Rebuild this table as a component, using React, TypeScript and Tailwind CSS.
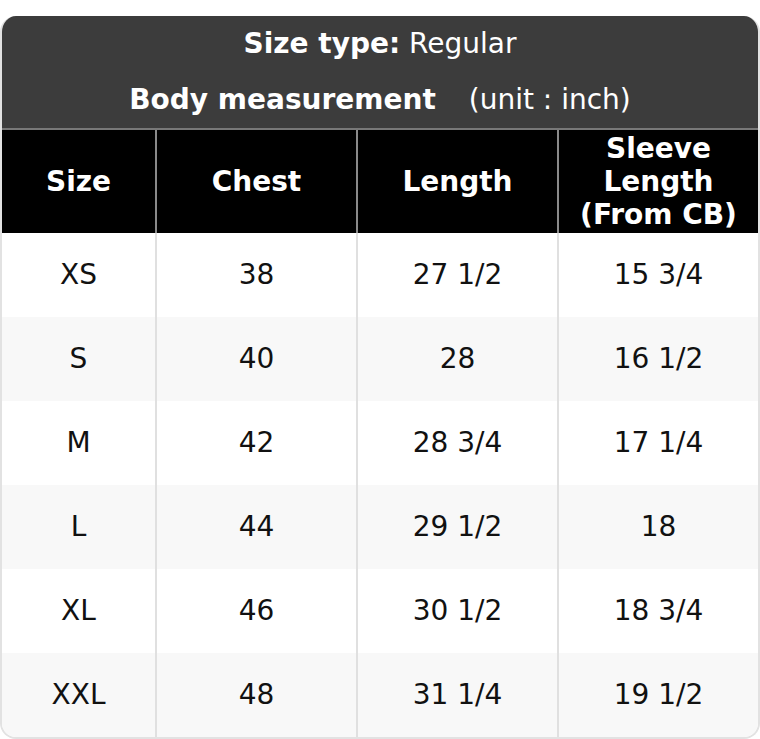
import React from "react";

const rows = [
  ["XS", "38", "27 1/2", "15 3/4"],
  ["S", "40", "28", "16 1/2"],
  ["M", "42", "28 3/4", "17 1/4"],
  ["L", "44", "29 1/2", "18"],
  ["XL", "46", "30 1/2", "18 3/4"],
  ["XXL", "48", "31 1/4", "19 1/2"],
];

const cols = "grid grid-cols-[155px_201px_201px_1fr]";

export default function App() {
  return (
    <div className="w-[760px] bg-white pt-[16px]" style={{ fontFamily: '"DejaVu Sans", sans-serif' }}>
      <div className="overflow-hidden rounded-[16px] border-2 border-[#e2e2e2] border-t-0">
        <div className="bg-[#3c3c3c] text-white text-[28px] text-center">
          <div className="h-[56px] flex items-center justify-center">
            <span className="font-bold">Size type:</span>
            <span>&nbsp;Regular</span>
          </div>
          <div className="h-[56px] flex items-center justify-center">
            <span className="font-bold">Body measurement</span>
            <span className="ml-[33px]">(unit : inch)</span>
          </div>
        </div>
        <div className={`${cols} bg-black text-white font-bold text-[28px] leading-[33px] text-center border-t-2 border-[#787878]`}>
          <div className="h-[103px] flex items-center justify-center border-r-2 border-[#8a8a8a]">Size</div>
          <div className="h-[103px] flex items-center justify-center border-r-2 border-[#8a8a8a]">Chest</div>
          <div className="h-[103px] flex items-center justify-center border-r-2 border-[#8a8a8a]">Length</div>
          <div className="h-[103px] flex items-center justify-center">
            Sleeve
            <br />
            Length
            <br />
            (From CB)
          </div>
        </div>
        {rows.map((r, i) => (
          <div
            key={r[0]}
            className={`${cols} text-[28px] text-[#111] text-center ${i % 2 === 1 ? "bg-[#f8f8f8]" : "bg-white"}`}
          >
            {r.map((c, j) => (
              <div
                key={j}
                className={`h-[84px] flex items-center justify-center ${j < 3 ? "border-r-2 border-[#e0e0e0]" : ""}`}
              >
                {c}
              </div>
            ))}
          </div>
        ))}
      </div>
    </div>
  );
}
